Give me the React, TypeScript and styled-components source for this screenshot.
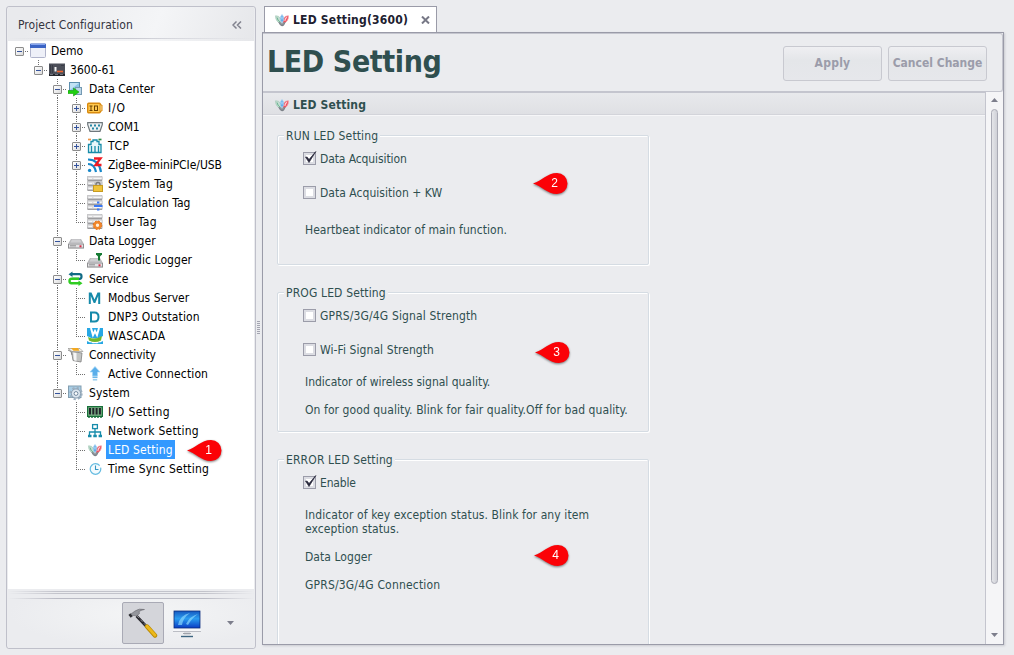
import React from "react";
import styled, { createGlobalStyle } from "styled-components";

const Global = createGlobalStyle`
  * { box-sizing: border-box; }
  body {
    margin: 0;
    background: #ebecef;
    font-family: "DejaVu Sans Condensed", "DejaVu Sans", Tahoma, sans-serif;
    font-stretch: condensed;
    font-size: 12px;
    line-height: 14px;
    color: #2f4f4f;
    overflow: hidden;
  }
`;

const Window = styled.div`
  position: relative;
  display: flex;
  width: 1014px;
  height: 655px;
  padding: 6px 10px 0 6px;
  overflow: hidden;
`;

/* ---------- sidebar ---------- */

const Sidebar = styled.aside`
  display: flex;
  flex-direction: column;
  width: 250px;
  height: 643px;
  padding: 0 1px;
  border: 1px solid #bfc0ca;
  border-radius: 3px;
`;

const SidebarHeader = styled.header`
  display: flex;
  align-items: center;
  justify-content: space-between;
  height: 34px;
  padding: 1px 12px 0 10px;
  color: #33343f;
  letter-spacing: 0.06px;
  background: linear-gradient(to right, transparent, #c9cad2 50%, transparent) 0 31px / 100% 1px no-repeat,
    linear-gradient(110deg, #e9eaed 10%, #f4f5f7 60%, #e6e7ea);
`;

const Tree = styled.div`
  display: flex;
  flex-direction: column;
  flex: 1;
  padding-left: 2px;
  background: #fff;
  color: #000;
`;

const TreeRow = styled.div`
  display: flex;
  height: 19px;
`;

const dots = (dir: string) => `repeating-linear-gradient(to ${dir}, #6f6f6f 0 1px, transparent 1px 2px)`;

const TreeCell = styled.span<{ $up?: boolean; $down?: boolean; $branch?: boolean }>`
  display: flex;
  align-items: center;
  justify-content: center;
  width: 19px;
  height: 19px;
  padding-top: 1px;
  background-image: ${(p) => [p.$up ? dots("bottom") : "none", p.$down ? dots("bottom") : "none", p.$branch ? dots("right") : "none"].join(",")};
  background-repeat: no-repeat;
  background-position: 9px 0, 9px 10px, 9px 10px;
  background-size: 1px 11px, 1px 9px, 10px 1px;
`;

const Expander = styled.span<{ $plus?: boolean }>`
  width: 9px;
  height: 9px;
  border: 1px solid #8c8c8c;
  border-radius: 1px;
  background: linear-gradient(#35539c, #35539c) center / 5px 1px no-repeat,
    ${(p) => (p.$plus ? "linear-gradient(#35539c, #35539c) center / 1px 5px no-repeat," : "")}
    linear-gradient(135deg, #fff, #dcdcdc);
`;

const IconSlot = styled.span`
  display: flex;
  align-items: center;
  width: 19px;
  height: 19px;
  padding-left: 1px;
`;

const TreeLabel = styled.span<{ $selected?: boolean; $track: number }>`
  height: 19px;
  margin-left: 1px;
  padding: 1px 2px 0;
  line-height: 19px;
  white-space: pre;
  letter-spacing: ${(p) => p.$track}px;
  background: ${(p) => (p.$selected ? "#3399ff" : "none")};
  color: ${(p) => (p.$selected ? "#fff" : "inherit")};
`;

const Splitter = styled.div`
  height: 10px;
  background: linear-gradient(to right, transparent, #c2c3cb 20% 80%, transparent) 0 2px / 100% 1px no-repeat,
    linear-gradient(to right, transparent, #c2c3cb 20% 80%, transparent) 0 4px / 100% 1px no-repeat,
    linear-gradient(to right, transparent, #b9bac4 20% 80%, transparent) 0 9px / 100% 1px no-repeat,
    #ebecef;
`;

const SidebarFooter = styled.footer`
  display: flex;
  align-items: flex-start;
  height: 49px;
  padding: 3px 20px 0 114px;
  background: radial-gradient(ellipse at 55% 30%, #f4f5f6, #ebecef 70%);
`;

const ToolButton = styled.button<{ $active?: boolean }>`
  display: flex;
  flex-shrink: 0;
  align-items: center;
  justify-content: center;
  width: 42px;
  height: 42px;
  margin: 0 2px 0 0;
  padding: ${(p) => (p.$active ? "0 0 2px 0" : "2px 0 0 0")};
  border: 1px solid ${(p) => (p.$active ? "#a9aab5" : "transparent")};
  border-radius: 2px;
  background: ${(p) => (p.$active ? "#d4d5da" : "none")};
`;

const MoreButton = styled.span`
  display: flex;
  margin: 19px 0 0 17px;
`;

const Grip = styled.div`
  width: 6px;
  display: flex;
  align-items: flex-start;
  padding: 315px 0 0 1px;
  &::before {
    content: "";
    width: 3px;
    height: 13px;
    background: repeating-linear-gradient(#a4a5b1 0 1px, transparent 1px 2px);
  }
`;

/* ---------- document area ---------- */

const Documents = styled.main`
  display: flex;
  flex-direction: column;
  width: 742px;
  height: 639px;
`;

const Tab = styled.div`
  z-index: 1;
  display: flex;
  align-items: center;
  width: 173px;
  height: 26px;
  margin-left: 2px;
  padding: 1px 6px 0 9px;
  border: 1px solid #9a9ba8;
  border-bottom: 0;
  background: #fff;
  color: #20202f;
  font-weight: bold;
`;

const TabTitle = styled.span`
  flex: 1;
  margin-left: 3px;
  letter-spacing: 0.22px;
`;

const Page = styled.section`
  display: flex;
  flex-direction: column;
  width: 742px;
  height: 613px;
  border: 1px solid #9a9ba8;
  box-shadow: 1px 1px 2px #c9cad1;
`;

const PageHeader = styled.header`
  display: flex;
  align-items: center;
  justify-content: space-between;
  height: 59px;
  padding: 0 15px 0 4px;
  border: 1px solid #c4c5ce;
  border-width: 1px 1px 1px 0;
  border-radius: 0 3px 3px 0;
`;

const PageTitle = styled.h1`
  margin: -2px 0 0;
  font-size: 30px;
  line-height: 36px;
  letter-spacing: -0.4px;
`;

const Actions = styled.div`
  display: flex;
  gap: 6px;
  padding-top: 1px;
`;

const ActionButton = styled.button<{ $track: number }>`
  width: 99px;
  height: 35px;
  padding: 0;
  border: 1px solid #c8c9d0;
  border-radius: 3px;
  background: linear-gradient(#efeff2, #e4e6e9 40%, #e6e7eb);
  color: #9b9caa;
  font: inherit;
  font-weight: bold;
  letter-spacing: ${(p) => p.$track}px;
  white-space: nowrap;
`;

const PageBody = styled.div`
  display: flex;
  flex: 1;
  min-height: 0;
`;

const Form = styled.div`
  display: flex;
  flex-direction: column;
  width: 723px;
  overflow: hidden;
  border-top: 1px solid #c4c5ce;
  border-right: 1px solid #c4c5ce;
`;

const SectionHeader = styled.div`
  display: flex;
  align-items: center;
  flex-shrink: 0;
  height: 22px;
  padding: 2px 0 0 11px;
  gap: 3px;
  border-bottom: 1px solid #d3d4da;
  background: linear-gradient(#e8e9ec, #dfe0e4);
  box-shadow: 0 1px 0 #f6f6f8;
  font-weight: bold;
  letter-spacing: 0.14px;
`;

const Groups = styled.div`
  display: flex;
  flex-direction: column;
  gap: 27px;
  padding: 20px 0 0 14px;
`;

const Group = styled.div<{ $height: number }>`
  flex-shrink: 0;
  width: 372px;
  height: ${(p) => p.$height}px;
  border: 1px solid #d5dce3;
  border-radius: 2px;
  box-shadow: 1px 1px 0 #fff, inset 1px 1px 0 #fff;
`;

const Legend = styled.div`
  width: fit-content;
  margin: -7px 0 9px 6px;
  padding: 0 2px;
  background: #ebecef;
  letter-spacing: 0.14px;
`;

const CheckRow = styled.div<{ $track: number }>`
  display: flex;
  gap: 4px;
  height: 14px;
  margin-left: 25px;
  letter-spacing: ${(p) => p.$track}px;
  & + & { margin-top: 20px; }
`;

const Box = styled.span`
  width: 13px;
  height: 13px;
  border: 1px solid #9b9ca9;
  background: #fff;
  box-shadow: inset 0 0 0 2px #dcdde3;
  svg { display: block; margin: -2px 0 0 0; overflow: visible; }
`;

const Note = styled.p<{ $top: number; $track: number }>`
  width: 335px;
  margin: ${(p) => p.$top}px 0 0 27px;
  white-space: pre-line;
  letter-spacing: ${(p) => p.$track}px;
`;

const Scrollbar = styled.div`
  display: flex;
  flex-direction: column;
  align-items: center;
  justify-content: space-between;
  width: 17px;
  padding: 6px 0 7px;
  background: #f5f5f7;
`;

const Thumb = styled.div`
  width: 7px;
  height: 475px;
  margin-bottom: 43px;
  border: 1px solid #a9aab5;
  border-radius: 4px;
  background: linear-gradient(to right, #e4e5e9, #cfd0d7);
`;

const Marker = styled.div<{ $x: number; $y: number }>`
  position: absolute;
  left: ${(p) => p.$x}px;
  top: ${(p) => p.$y}px;
  width: 35px;
  height: 21px;
  padding-left: 8px;
  color: #fff;
  font: 12px/21px "Liberation Sans", Arial, sans-serif;
  text-align: center;
  filter: drop-shadow(0 1px 1px rgba(0, 0, 0, 0.5));
  svg { position: absolute; left: 0; top: 0; z-index: -1; }
`;

/* ---------- icons ---------- */

const Svg = ({ children, size = 16 }: { children: React.ReactNode; size?: number }) => (
  <svg width={size} height={size} viewBox={`0 0 ${size} ${size}`}>{children}</svg>
);

const Tags = ({ children }: { children?: React.ReactNode }) => (
  <Svg>
    {[0, 5, 10].map((y) => (
      <g key={y}>
        <rect x="0" y={y} width="15.500" height="5" rx="1" fill="#b4b4b6" />
        <rect x=".5" y={y + 0.5} width="14.500" height="3" rx="1" fill="#dcdcde" />
        <path d={`M1.500 ${y + 2.5}h3.500M6.500 ${y + 2.5}h8`} stroke="#f6f6f6" />
        <path d={`M1 ${y + 4.5}h14`} stroke="#9d9da0" />
      </g>
    ))}
    {children}
  </Svg>
);

const DriveShape = () => (
  <>
    <path d="M3 6.500h10l3 5v4H0v-4z" fill="#d8d8d8" />
    <path d="M3 6h10l3 5H0z" fill="#b9b9bc" />
    <path d="M4 6.500h8l1.500 3h-11z" fill="#cfcfd2" />
    <path d="M0 11h16v4.500H0z" fill="#8e8e90" />
    <path d="M1 11.500h14v3H1z" fill="#e2e2e4" />
    <path d="M2 12.500h6M2 14h6" stroke="#a7a7a9" />
    <rect x="11.500" y="12.300" width="2" height="2" fill="#d92c45" />
  </>
);

const LedIcon = () => (
  <Svg>
    <path d="M1.500 3.800q3.200-.6 5.500 3.200v4.500Q1.500 10 1.500 3.800z" fill="#c4ddd0" stroke="#9cc4b1" strokeWidth=".6" />
    <path d="M3 5.500q.6 3 3 4.600" stroke="#5fae8b" fill="none" strokeWidth=".9" />
    <path d="M14.500 3.800q-3.200-.6-5.500 3.200v4.500q5.500-1.500 5.500-7.700z" fill="#f0505f" stroke="#f0a5ac" strokeWidth=".7" />
    <path d="M12.800 5.300q-1.600 1-2 3.600" stroke="#fcd4d7" strokeWidth="1.200" fill="none" />
    <path d="M4.300 10q1.500 4 3.700 4.200T11.700 10L8 10.800z" fill="#7b8188" />
    <path d="M8 2.500q3.600 3.800 0 8.200-3.600-4.400 0-8.200z" fill="#5ea9e8" stroke="#a9d2f0" strokeWidth=".7" />
    <path d="M8 4.500v3" stroke="#c6e6fb" />
    <path d="M6.500 11.800h3" stroke="#b5babe" strokeWidth=".8" />
  </Svg>
);

const icons: Record<string, React.ReactNode> = {
  app: (
    <Svg>
      <rect x=".5" y="1.500" width="15" height="13" rx="1" fill="#eef0f8" stroke="#b0b4cb" />
      <path d="M0 1.500Q0 .5 1 .5h14q1 0 1 1V5H0z" fill="#3a63c4" />
      <path d="M1 1.500h14" stroke="#87a6ee" />
    </Svg>
  ),
  device: (
    <Svg>
      <rect x="0" y="1.500" width="16" height="12.500" fill="#4c4f59" />
      <path d="M1.500 3v8M3.500 3v8M12 3.500h3" stroke="#393c46" />
      <path d="M5.500 9.500V5h2v4.500z" fill="#f5f5f5" />
      <path d="M8 9.500h6" stroke="#f0652f" strokeWidth="1.600" />
      <path d="M0 13h16" stroke="#24262c" strokeWidth="2" />
      <path d="M1 12.500h3M6 12.500h3M11 12.500h3" stroke="#72757d" />
    </Svg>
  ),
  center: (
    <Svg>
      <rect x="1.500" y="1.500" width="10" height="10" fill="#8dc5e8" stroke="#5d8fae" />
      <path d="M2 2h9L2 9z" fill="#c2e2f4" />
      <rect x="7.500" y="6.500" width="6" height="7" fill="#bbd6e8" stroke="#759ab3" />
      <path d="M0 9.500h5.500V7l5.500 4-5.500 4v-2.500H0z" fill="#1fd010" stroke="#159a0b" strokeWidth=".6" />
    </Svg>
  ),
  io: (
    <Svg>
      <rect x=".7" y="3.200" width="12.600" height="9.600" rx="1" fill="#ffc84e" stroke="#d98a0e" strokeWidth="1.400" />
      <path d="M13.500 5H15v6h-1.500" fill="#ffe2a0" stroke="#d98a0e" />
      <path d="M2.500 6h3M2.500 10.500h3M4 6v4.500" stroke="#6d4100" />
      <rect x="7.500" y="6" width="3" height="4.500" fill="none" stroke="#6d4100" />
    </Svg>
  ),
  com: (
    <Svg>
      <path d="M.7 3.700h14.600v2L13 12.300H3L.7 5.700z" fill="#eef2f3" stroke="#6f787c" strokeWidth="1.200" />
      <path d="M3 6.500h2M7 6.500h2M11 6.500h2M5 9.500h2M9 9.500h2" stroke="#2787a6" strokeWidth="2" />
    </Svg>
  ),
  tcp: (
    <Svg>
      <path d="M1.500 14.500v-8h2.500v-3h2V2h4v1.500h2v3h2v8z" fill="#e7f6fa" stroke="#188ca9" strokeWidth="1.300" />
      <path d="M4.500 8v6M8 8v6M11.500 8v6" stroke="#188ca9" strokeWidth="1.300" />
      <path d="M1 1.500h3" stroke="#ee9447" strokeWidth="1.700" />
      <path d="M11.500 1.500h3" stroke="#2e8a45" strokeWidth="1.700" />
    </Svg>
  ),
  zigbee: (
    <Svg>
      <path d="M1 2.500q11 0 13 12.500M1 7q6.500 0 8 8" fill="none" stroke="#1687c9" strokeWidth="2.200" />
      <circle cx="2.600" cy="13.400" r="1.700" fill="#1687c9" />
      <path d="M7 1.500h6.500L8.500 8h6" fill="none" stroke="#ee1c24" strokeWidth="2.300" />
    </Svg>
  ),
  systag: (
    <Tags>
      <rect x="7" y="5" width="8" height="6" fill="#c9c9cb" />
      <path d="M9 10V8.500q0-2 2-2t2 2V10" fill="none" stroke="#777" strokeWidth="1.300" />
      <rect x="6.500" y="9.500" width="9" height="6" fill="#f0c33a" stroke="#c79b20" />
    </Tags>
  ),
  calctag: (
    <Tags>
      <path d="M7 11h8.500" stroke="#3a78f4" strokeWidth="2" />
      <path d="M10 7.500h2.400M10 14.500h2.400" stroke="#3a78f4" strokeWidth="2" />
    </Tags>
  ),
  usertag: (
    <Tags>
      <circle cx="10.500" cy="11.300" r="3" fill="#fff1dc" stroke="#f1862a" strokeWidth="2.600" />
      <circle cx="10.500" cy="11.300" r="4.300" fill="none" stroke="#e0690a" strokeDasharray="1.600 1.800" />
    </Tags>
  ),
  drive: <Svg><DriveShape /></Svg>,
  periodic: (
    <Svg>
      <DriveShape />
      <path d="M9 2h6M12 2v6.500" stroke="#177b35" strokeWidth="2" />
      <path d="M9.500 3l2.500 2.500L14.500 3" fill="#177b35" />
    </Svg>
  ),
  service: (
    <Svg>
      <path d="M3 3.200h8.500q2 0 2 2.200T11.500 7.800H4" fill="none" stroke="#116b85" strokeWidth="2.200" />
      <path d="M.5 3.200L4.500.5v5.400z" fill="#116b85" />
      <path d="M11 7.800H3.500Q1.500 7.800 1.500 10t2 2.300H12" fill="none" stroke="#30cc22" strokeWidth="2.400" />
      <path d="M14.500 12.300L10.500 9.600v5.400z" fill="#30cc22" />
    </Svg>
  ),
  modbus: <Svg><path d="M1.800 14V2.500h2.700L7.500 9.500l3-7h2.700V14h-2V6L8.300 13H6.700L3.800 6v8z" fill="#168aaa" /></Svg>,
  dnp: <Svg><path d="M4 3.500h3.500q4 0 4 4.500t-4 4.500H4z" fill="none" stroke="#168aaa" strokeWidth="2" /></Svg>,
  wascada: (
    <Svg>
      <rect width="16" height="16" fill="#27a7e4" />
      <path d="M4 0l2 7 2-4 2 4 2-7" fill="none" stroke="#fff" strokeWidth="2" />
      <path d="M0 8q8 5 16 0v5q-8 5-16 0z" fill="#fff" />
      <path d="M1 9q7 3.500 14-1l-1 4.500q-6 3-12 0z" fill="#72b82b" />
      <path d="M4 14v2M8 15v1M12 14v2" stroke="#27a7e4" />
    </Svg>
  ),
  connectivity: (
    <Svg>
      <path d="M3.500 4.500l10.500 1.500-1 9-8-1.500z" fill="#c3c4c2" stroke="#808080" strokeWidth=".8" />
      <path d="M5.200 5.500l3.300.5v8L6 13.300z" fill="#f6f6f6" />
      <path d="M0 3l3 1.500 1 3.500" fill="none" stroke="#888" />
      <path d="M0 1.500l4 3h11l-3-3z" fill="#f4f1e8" stroke="#888" strokeWidth=".6" />
      <path d="M3 1h7l1.500 2.800H5.500z" fill="#f2a821" />
    </Svg>
  ),
  active: (
    <Svg>
      <path d="M8 .5L13 6h-2.500v4h-5V6H3z" fill="#5aaeea" stroke="#a5d8f8" strokeWidth=".7" />
      <path d="M5.500 11.300h5" stroke="#6bb7e8" strokeWidth="1.600" />
      <path d="M5.800 13.800h4.400" stroke="#8fc8ec" strokeWidth="1.400" />
    </Svg>
  ),
  system: (
    <Svg>
      <rect x=".5" y="1" width="12.500" height="11.500" fill="#a8cde5" stroke="#829daf" />
      <circle cx="8" cy="8.500" r="5.800" fill="none" stroke="#9eb0c0" strokeWidth="1.800" strokeDasharray="2.300 2.255" />
      <circle cx="8" cy="8.500" r="4.600" fill="#dce6ef" stroke="#8a9db0" strokeWidth="1" />
      <circle cx="8" cy="8.500" r="1.900" fill="#fff" stroke="#71889e" />
    </Svg>
  ),
  ioset: (
    <Svg>
      <rect x=".6" y="2.600" width="14.800" height="9.800" fill="#78ad83" stroke="#17713a" strokeWidth="1.200" />
      <path d="M3 4v6.500M6.300 4v6.500M9.600 4v6.500M12.900 4v6.500" stroke="#20252a" strokeWidth="2" />
      <path d="M1 13h14" stroke="#17713a" strokeWidth="1.600" strokeDasharray="2 1" />
    </Svg>
  ),
  network: (
    <Svg>
      <rect x="5.600" y="1.600" width="4.800" height="4" fill="none" stroke="#178cab" strokeWidth="1.300" />
      <path d="M8 6v6M2.500 12V9h11v3" fill="none" stroke="#178cab" strokeWidth="1.300" />
      <path d="M1 13h3.500M6.300 13h3.500M11.600 13H15" stroke="#178cab" strokeWidth="2.400" />
    </Svg>
  ),
  led: <LedIcon />,
  time: (
    <Svg>
      <circle cx="8.500" cy="8" r="5.300" fill="#f4fbfe" stroke="#66bce1" strokeWidth="1.200" strokeDasharray="29 2 2 1" />
      <path d="M8.500 4.500V8.500h3" fill="none" stroke="#3596c4" strokeWidth="1.100" />
    </Svg>
  ),
};

const HammerIcon = () => (
  <Svg size={32}>
    <path d="M9.500 10l9.500 10" stroke="#26262c" strokeWidth="2.600" />
    <path d="M10 10l9 9.500" stroke="#9a9aa0" strokeWidth=".8" strokeDasharray="3 2" />
    <path d="M20 20.500l8 9" stroke="#b98900" strokeWidth="4.400" strokeLinecap="round" />
    <path d="M20 20.200l8 9" stroke="#ecb81a" strokeWidth="2.800" strokeLinecap="round" />
    <path d="M2 8.500l2 2.500 2.500-1.500L10 9.800l2.500-2.300-.5-2q3-1.700 5.500-2-5.500-1.500-9.500 1.500L5 7.200z" fill="#94969c" stroke="#5a5b61" strokeWidth=".5" />
    <path d="M1.500 9l2.200 2.800L5.500 10 3.500 7.500z" fill="#2e2f34" />
  </Svg>
);

const MonitorIcon = () => (
  <svg width="28" height="28" viewBox="0 0 28 28">
    <defs>
      <linearGradient id="screen" x1="0" y1="0" x2="0" y2="1">
        <stop offset="0" stopColor="#1559c0" />
        <stop offset=".45" stopColor="#2a9df0" />
        <stop offset="1" stopColor="#0a3cc4" />
      </linearGradient>
    </defs>
    <rect x="0" y="0" width="28" height="22" fill="#f5f6f8" />
    <rect x="1" y="1" width="26" height="17" fill="url(#screen)" stroke="#0b2c78" strokeWidth=".8" />
    <path d="M5 15Q7 5 17 3 10 8 9 15zM13 14Q17 6 25 4q-6 4-10 11z" fill="#8fdcff" opacity=".65" />
    <path d="M0 21.500h28" stroke="#bbbdc4" />
    <path d="M11 22h6v3h-6z" fill="#d8dade" />
    <path d="M10 23.500h8" stroke="#9fa3ab" />
    <path d="M8 26.500h12" stroke="#3d6580" strokeWidth="1.400" />
  </svg>
);

const Check = () => (
  <svg width="14" height="13" viewBox="0 0 14 13">
    <path d="M1.500 6L5 11.500 11.800.5 5 8.600 3.300 6.200z" fill="#26263a" stroke="#26263a" strokeWidth=".7" />
  </svg>
);

const Triangle = ({ up }: { up?: boolean }) => (
  <svg width="7" height="4" viewBox="0 0 7 4">
    <path d={up ? "M0 4L3.500 0 7 4z" : "M0 0h7L3.500 4z"} fill="#7d7e8c" />
  </svg>
);

/* ---------- tree data ---------- */

type Node = { icon: string; label: string; track?: number; open?: boolean; plus?: boolean; selected?: boolean; children?: Node[] };

const tree: Node[] = [
  {
    icon: "app", label: "Demo", open: true, children: [
      {
        icon: "device", label: "3600-61", open: true, children: [
          {
            icon: "center", label: "Data Center", open: true, children: [
              { icon: "io", label: "I/O", track: 0.8, plus: true },
              { icon: "com", label: "COM1", track: -0.2, plus: true },
              { icon: "tcp", label: "TCP", track: 0.5, plus: true },
              { icon: "zigbee", label: "ZigBee-miniPCIe/USB", track: -0.05, plus: true },
              { icon: "systag", label: "System Tag", track: 0.35 },
              { icon: "calctag", label: "Calculation Tag", track: 0.05 },
              { icon: "usertag", label: "User Tag", track: 0.35 },
            ],
          },
          { icon: "drive", label: "Data Logger", open: true, children: [{ icon: "periodic", label: "Periodic Logger", track: 0.06 }] },
          {
            icon: "service", label: "Service", track: -0.1, open: true, children: [
              { icon: "modbus", label: "Modbus Server" },
              { icon: "dnp", label: "DNP3 Outstation", track: 0.12 },
              { icon: "wascada", label: "WASCADA", track: 0.42 },
            ],
          },
          {
            icon: "connectivity", label: "Connectivity", track: -0.06, open: true,
            children: [{ icon: "active", label: "Active Connection", track: 0.13 }],
          },
          {
            icon: "system", label: "System", track: 0.1, open: true, children: [
              { icon: "ioset", label: "I/O Setting", track: 0.42 },
              { icon: "network", label: "Network Setting", track: 0.25 },
              { icon: "led", label: "LED Setting", track: 0.13, selected: true },
              { icon: "time", label: "Time Sync Setting", track: 0.18 },
            ],
          },
        ],
      },
    ],
  },
];

const Branch = ({ nodes, rails = [] }: { nodes: Node[]; rails?: boolean[] }) => (
  <>
    {nodes.map((n, i) => {
      const more = i < nodes.length - 1;
      return (
        <React.Fragment key={n.label}>
          <TreeRow>
            {rails.map((line, k) => <TreeCell key={k} $up={line} $down={line} />)}
            <TreeCell $up={rails.length > 0} $down={more} $branch>
              {(n.open || n.plus) && <Expander $plus={n.plus} />}
            </TreeCell>
            <IconSlot>{icons[n.icon]}</IconSlot>
            <TreeLabel $selected={n.selected} $track={n.track ?? 0.02}>{n.label}</TreeLabel>
          </TreeRow>
          {n.children && <Branch nodes={n.children} rails={[...rails, more]} />}
        </React.Fragment>
      );
    })}
  </>
);

const CheckItem = ({ label, checked, track }: { label: string; checked?: boolean; track: number }) => (
  <CheckRow $track={track}>
    <Box>{checked && <Check />}</Box>
    <span>{label}</span>
  </CheckRow>
);

const markers = [
  { n: 1, x: 187, y: 440 },
  { n: 2, x: 533, y: 173 },
  { n: 3, x: 535, y: 342 },
  { n: 4, x: 534, y: 545 },
];

export default function App() {
  return (
    <Window>
      <Global />
      <Sidebar>
        <SidebarHeader>
          <span>Project Configuration</span>
          <svg width="10" height="8" viewBox="0 0 10 8">
            <path d="M4.500.5L1 4l3.500 3.500M9 .5L5.500 4 9 7.500" fill="none" stroke="#82838f" strokeWidth="1.500" />
          </svg>
        </SidebarHeader>
        <Tree><Branch nodes={tree} /></Tree>
        <Splitter />
        <SidebarFooter>
          <ToolButton $active><HammerIcon /></ToolButton>
          <ToolButton><MonitorIcon /></ToolButton>
          <MoreButton><Triangle /></MoreButton>
        </SidebarFooter>
      </Sidebar>
      <Grip />
      <Documents>
        <Tab>
          <LedIcon />
          <TabTitle>LED Setting(3600)</TabTitle>
          <svg width="9" height="8" viewBox="0 0 9 8">
            <path d="M1 .5l7 7M8 .5l-7 7" stroke="#777886" strokeWidth="2" />
          </svg>
        </Tab>
        <Page>
          <PageHeader>
            <PageTitle>LED Setting</PageTitle>
            <Actions>
              <ActionButton $track={0.25}>Apply</ActionButton>
              <ActionButton $track={0}>Cancel Change</ActionButton>
            </Actions>
          </PageHeader>
          <PageBody>
            <Form>
              <SectionHeader><LedIcon />LED Setting</SectionHeader>
              <Groups>
                <Group $height={130}>
                  <Legend>RUN LED Setting</Legend>
                  <CheckItem label="Data Acquisition" track={-0.1} checked />
                  <CheckItem label="Data Acquisition + KW" track={0.03} />
                  <Note $top={23} $track={0.04}>Heartbeat indicator of main function.</Note>
                </Group>
                <Group $height={140}>
                  <Legend>PROG LED Setting</Legend>
                  <CheckItem label="GPRS/3G/4G Signal Strength" track={0.14} />
                  <CheckItem label="Wi-Fi Signal Strength" track={0.08} />
                  <Note $top={18} $track={-0.02}>Indicator of wireless signal quality.</Note>
                  <Note $top={14} $track={0.08}>On for good quality. Blink for fair quality.Off for bad quality.</Note>
                </Group>
                <Group $height={220}>
                  <Legend>ERROR LED Setting</Legend>
                  <CheckItem label="Enable" track={-0.18} checked />
                  <Note $top={18} $track={0.09}>{"Indicator of key exception status. Blink for any item\nexception status."}</Note>
                  <Note $top={14} $track={0.06}>Data Logger</Note>
                  <Note $top={14} $track={0.18}>GPRS/3G/4G Connection</Note>
                </Group>
              </Groups>
            </Form>
            <Scrollbar>
              <Triangle up />
              <Thumb />
              <Triangle />
            </Scrollbar>
          </PageBody>
        </Page>
      </Documents>
      {markers.map((m) => (
        <Marker key={m.n} $x={m.x} $y={m.y}>
          <svg width="35" height="21" viewBox="0 0 35 21">
            <path d="M0 10.500C9 8 14 0 24 0a10.500 10.500 0 0 1 0 21C14 21 9 13 0 10.500z" fill="#fb0207" />
          </svg>
          {m.n}
        </Marker>
      ))}
    </Window>
  );
}
